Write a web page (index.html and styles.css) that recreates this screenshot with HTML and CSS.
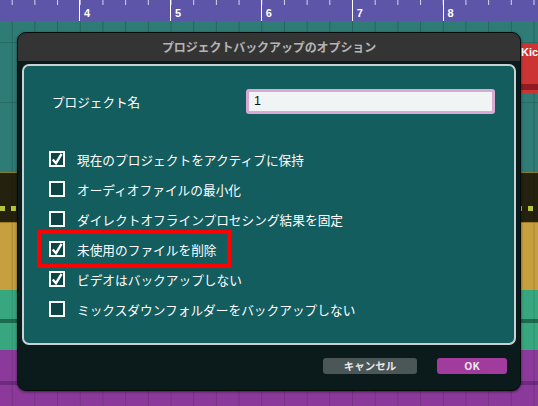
FILE: index.html
```html
<!DOCTYPE html>
<html lang="ja">
<head>
<meta charset="utf-8">
<title>プロジェクトバックアップのオプション</title>
<link rel="stylesheet" href="styles.css">
</head>
<body>
<div class="daw">
  <div class="ruler">
    <div class="ruler-lead"></div>
    <div class="bar">4</div>
    <div class="bar">5</div>
    <div class="bar">6</div>
    <div class="bar">7</div>
    <div class="bar">8</div>
  </div>
  <div class="track track-teal"></div>
  <div class="track track-dark"><div class="dots"></div></div>
  <div class="track track-gold"></div>
  <div class="track track-green"></div>
  <div class="track track-purple"></div>

  <div class="clip-red"><span>Kic</span></div>

  <div class="dialog">
    <div class="titlebar">プロジェクトバックアップのオプション</div>
    <div class="panel">
      <div class="name-row">
        <span class="name-label">プロジェクト名</span>
        <div class="name-input">1</div>
      </div>
      <ul class="options">
        <li class="option"><span class="box"><svg class="check" viewBox="0 0 12 12"><path d="M1.8 6.4 L5 10.2 L10.6 0.8"/></svg></span><span>現在のプロジェクトをアクティブに保持</span></li>
        <li class="option"><span class="box"></span><span>オーディオファイルの最小化</span></li>
        <li class="option"><span class="box"></span><span>ダイレクトオフラインプロセシング結果を固定</span></li>
        <li class="option highlight"><span class="box"><svg class="check" viewBox="0 0 12 12"><path d="M1.8 6.4 L5 10.2 L10.6 0.8"/></svg></span><span>未使用のファイルを削除</span></li>
        <li class="option"><span class="box"><svg class="check" viewBox="0 0 12 12"><path d="M1.8 6.4 L5 10.2 L10.6 0.8"/></svg></span><span>ビデオはバックアップしない</span></li>
        <li class="option"><span class="box"></span><span>ミックスダウンフォルダーをバックアップしない</span></li>
      </ul>
    </div>
    <div class="buttons">
      <button class="btn btn-cancel">キャンセル</button>
      <button class="btn btn-ok">OK</button>
    </div>
  </div>
</div>
</body>
</html>
```

FILE: styles.css
```css
* { box-sizing: border-box; }
html, body { margin: 0; padding: 0; }
body {
  width: 538px;
  height: 406px;
  overflow: hidden;
  font-family: "Noto Sans CJK JP", "Noto Sans", sans-serif;
}
.daw {
  position: relative;
  width: 538px;
  height: 406px;
  display: flex;
  flex-direction: column;
  background: #2f7b75;
}

/* ruler */
.ruler {
  height: 21px;
  flex: none;
  display: flex;
  background-color: #5d55a8;
  background-image: linear-gradient(to right, rgba(255,255,255,0.75) 1px, transparent 1px);
  background-size: 22.7px 5px;
  background-position: 11.7px 0;
  background-repeat: repeat-x;
}
.ruler-lead { width: 79px; flex: none; }
.bar {
  width: 90.9px;
  flex: none;
  border-left: 1px solid #ffffff;
  color: #ffffff;
  font: bold 11px "Liberation Sans", Arial, sans-serif;
  padding: 7px 0 0 4px;
  line-height: 12px;
}

/* tracks */
.track {
  flex: none;
  background-image: linear-gradient(to right, rgba(0,0,0,0.16) 1px, transparent 1px);
  background-size: 22.7px 100%;
  background-position: 11.7px 0;
}
.track-teal {
  height: 151px;
  background-color: #2f7b75;
  background-image:
    linear-gradient(to right, rgba(0,0,0,0.18) 1px, transparent 1px),
    linear-gradient(to bottom, transparent 21px, rgba(0,0,0,0.14) 21px, rgba(0,0,0,0.14) 22px, transparent 22px, transparent 81px, rgba(0,0,0,0.14) 81px, rgba(0,0,0,0.14) 82px, transparent 82px);
  background-size: 22.7px 100%, 100% 100%;
  background-position: 11.7px 0, 0 0;
}
.track-dark {
  height: 50px;
  background-color: #24210f;
  border-top: 1px solid #8a7d2a;
}
.dots {
  margin-top: 33px;
  height: 5px;
  background-image: linear-gradient(to right, #b5c43c 5px, transparent 5px);
  background-size: 11px 5px;
  background-repeat: repeat-x;
}
.track-gold {
  height: 68px;
  background-color: #c6a03e;
  border-top: 1px solid #a07a20;
}
.track-green {
  height: 60px;
  background-color: #38a67e;
  background-image:
    linear-gradient(to right, rgba(0,0,0,0.12) 1px, transparent 1px),
    linear-gradient(to bottom, transparent 29px, #1d6a4c 29px, #1d6a4c 33px, transparent 33px);
  background-size: 22.7px 100%, 100% 100%;
  background-position: 11.7px 0, 0 0;
}
.track-purple {
  flex: 1;
  background-color: #8b3a9b;
  background-image:
    linear-gradient(to right, rgba(0,0,0,0.14) 1px, transparent 1px),
    linear-gradient(to bottom, transparent 31px, #6e2a7c 31px, #6e2a7c 35px, transparent 35px);
  background-size: 22.7px 100%, 100% 100%;
  background-position: 11.7px 0, 0 0;
}

/* red clip on the canvas */
.clip-red {
  position: absolute;
  left: 518px;
  top: 43px;
  width: 22px;
  height: 50px;
  background: linear-gradient(to bottom, #cc3434 0, #cc3434 82%, #8e1c22 82%, #8e1c22 94%, #cc3434 94%);
  border-left: 1px solid #7a1a1a;
}
.clip-red span {
  display: block;
  padding: 3px 0 0 2px;
  color: #ffffff;
  font: bold 11px "Liberation Sans", Arial, sans-serif;
}

/* dialog */
.dialog {
  position: absolute;
  left: 17px;
  top: 32px;
  width: 504px;
  height: 359px;
  background: #0b1a1b;
  border: 1px solid #050a0a;
  border-radius: 9px;
  overflow: hidden;
  display: flex;
  flex-direction: column;
  box-shadow: 0 1px 3px rgba(0,0,0,0.5);
}
.titlebar {
  height: 28px;
  flex: none;
  background: #343434;
  color: #b5b5b5;
  font-size: 12px;
  font-weight: bold;
  text-align: center;
  line-height: 28px;
  letter-spacing: -0.1px;
}
.panel {
  margin: 3px 4px 0 4px;
  height: 281px;
  flex: none;
  background: #135d5f;
  border: 2px solid #c9d2d2;
  border-radius: 7px;
  padding: 23px 0 0 28px;
  color: #ffffff;
}
.name-row {
  display: flex;
  align-items: center;
  height: 25px;
}
.name-label {
  font-size: 12.6px;
  width: 194px;
  flex: none;
}
.name-input {
  width: 249px;
  height: 25px;
  background: #f0f4f4;
  border: 3px solid #d7a9d3;
  border-radius: 3px;
  color: #111;
  font: 12.5px "Liberation Sans", Arial, sans-serif;
  line-height: 19px;
  padding-left: 5px;
}
.options {
  list-style: none;
  margin: 30px 0 0 -3px;
  padding: 0;
}
.option {
  display: flex;
  align-items: center;
  height: 30px;
  font-size: 12.7px;
  gap: 12px;
  width: fit-content;
  padding-right: 10px;
}
.option.highlight {
  outline: 4px solid #ff0000;
  outline-offset: -2px;
  height: 34px;
  margin: -2px 0 -2px -10px;
  padding: 0 10px 0 10px;
  width: 190px;
}
.box {
  width: 16px;
  height: 16px;
  flex: none;
  border: 2px solid #ffffff;
  background: #0d4446;
  display: flex;
}
.check {
  width: 12px;
  height: 12px;
  fill: none;
  stroke: #ffffff;
  stroke-width: 2.4;
  stroke-linecap: butt;
  stroke-linejoin: miter;
}
.buttons {
  display: flex;
  justify-content: flex-end;
  gap: 20px;
  padding: 13px 13px 0 0;
}
.btn {
  height: 16px;
  border: none;
  border-radius: 3px;
  color: #e8e8e8;
  font-family: "Noto Sans CJK JP", "Noto Sans", sans-serif;
  font-size: 10.5px;
  font-weight: bold;
  line-height: 16px;
  padding: 0;
}
.btn-cancel { width: 94px; background: #4b5657; }
.btn-ok { width: 70px; background: #a13c9e; }
```
